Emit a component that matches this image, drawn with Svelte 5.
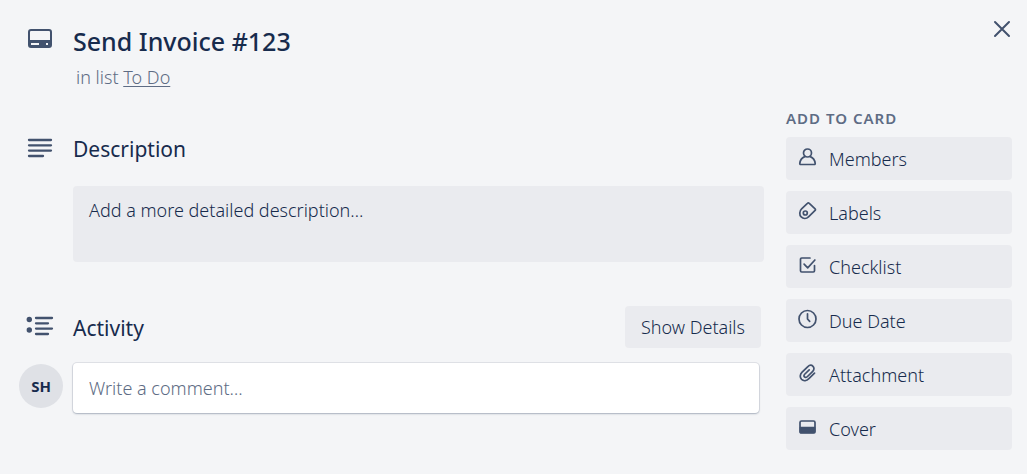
<script>
  let comment = $state('');
  let description = $state('');
  const actions = ['Members', 'Labels', 'Checklist', 'Due Date', 'Attachment', 'Cover'];
</script>

<div class="card">
  <header class="row head">
    <svg class="icon" viewBox="0 0 28 28" aria-hidden="true">
      <rect x="3" y="6" width="22" height="17" rx="2" fill="none" stroke="currentColor" stroke-width="2" />
      <path fill="currentColor" fill-rule="evenodd" d="M3 16h22v7H3zM5 19v2h8v-2zM20 19v2h2v-2z" />
    </svg>
    <div class="titles">
      <h1>Send Invoice #123</h1>
      <p>in list <a href="#todo">To Do</a></p>
    </div>
    <button class="close" aria-label="Close">
      <svg viewBox="0 0 20 20" aria-hidden="true"><path d="M3 3l14 14M17 3L3 17" fill="none" stroke="currentColor" stroke-width="2" stroke-linecap="round" /></svg>
    </button>
  </header>

  <div class="body">
    <main>
      <section class="row description">
        <svg class="icon" viewBox="0 0 28 28" aria-hidden="true">
          <path d="M3 5h22M3 10.300h22M3 15.600h22M3 21h14" fill="none" stroke="currentColor" stroke-width="2.300" stroke-linecap="round" />
        </svg>
        <h2><label for="description">Description</label></h2>
        <textarea id="description" class="field" placeholder="Add a more detailed description…" bind:value={description}></textarea>
      </section>

      <section class="row activity">
        <svg class="icon" viewBox="0 0 28 28" aria-hidden="true">
          <circle cx="3.300" cy="6.500" r="2.700" fill="currentColor" /><circle cx="3.300" cy="17" r="2.700" fill="currentColor" />
          <path d="M10 5h16M10 10.300h12M10 15.600h16M10 21h12" fill="none" stroke="currentColor" stroke-width="2.300" stroke-linecap="round" />
        </svg>
        <div class="bar">
          <h2>Activity</h2>
          <button class="soft">Show Details</button>
        </div>
        <div class="avatar">SH</div>
        <input class="comment" type="text" aria-label="Write a comment" placeholder="Write a comment…" bind:value={comment} />
      </section>
    </main>

    <aside>
      <h3>ADD TO CARD</h3>
      {#each actions as action}
        <button class="soft action">
          <svg viewBox="0 0 20 20" fill="none" stroke="currentColor" stroke-width="1.7" stroke-linecap="round" stroke-linejoin="round" aria-hidden="true">
            {#if action === 'Members'}
              <circle cx="9.500" cy="6" r="4" />
              <path d="M6.700 9.600C3.900 10.800 2.200 13 1.800 16.300c-.1.800.2 1.200 1 1.200h13.400c.8 0 1.100-.4 1-1.200-.4-3.300-2.100-5.500-4.900-6.700" />
            {:else if action === 'Labels'}
              <path d="M9.400 2.400 3.600 7.800C1.300 10 1.200 13.900 3.200 15.900s5.200 1.900 7.300-.1l6.600-6.400c.5-.5.5-1 0-1.500l-5.800-5.500c-.600-.600-1.300-.6-1.900 0z" />
              <circle cx="7.300" cy="12" r="2" />
            {:else if action === 'Checklist'}
              <path d="M12 3H3.700c-.8 0-1.200.4-1.200 1.200v11.600c0 .8.400 1.200 1.200 1.200h11.600c.8 0 1.200-.4 1.200-1.200v-5.300M6.100 9.200l3.600 3.600 7.200-7.800" />
            {:else if action === 'Due Date'}
              <circle cx="9.500" cy="10" r="8.500" />
              <path d="M9.500 4.800V10l2.200 2.400" />
            {:else if action === 'Attachment'}
              <path d="M16.500 10.200l-5.600 5.400c-2.300 2.300-5.300 2.700-7.300.8-2-2-1.700-5 .5-7.200l5.500-5.400c1.700-1.600 4-1.900 5.400-.5s1.200 3.600-.5 5.300l-5 4.900c-1 1-2.300 1.100-3 .4s-.6-1.900.4-2.900l4.300-4.200" />
            {:else}
              <rect x="2" y="4" width="15" height="12" rx="1.500" />
              <path d="M2.500 10.500h14v5h-14z" fill="currentColor" />
            {/if}
          </svg>
          <span>{action}</span>
        </button>
      {/each}
    </aside>
  </div>
</div>

<style>
  :global(body) {
    margin: 0;
    background: #f4f5f7;
  }
  .card {
    box-sizing: border-box;
    padding: 17px 15px 24px 19px;
    color: #172b4d;
    font-family: 'Segoe UI', 'Noto Sans', 'Open Sans', sans-serif;
    font-size: 18px;
    font-weight: 350;
    line-height: 24px;
  }
  h1, h2, h3, p {
    margin: 0;
  }
  button, input, textarea {
    box-sizing: border-box;
    margin: 0;
    border: 0;
    font: inherit;
    color: inherit;
  }
  .row {
    display: grid;
    grid-template-columns: 42px 1fr;
    column-gap: 12px;
  }
  .head {
    grid-template-columns: 42px 1fr auto;
  }
  .icon {
    width: 28px;
    height: 28px;
    margin-top: 8px;
    justify-self: center;
    color: #42526e;
    overflow: visible;
  }
  .head .icon, .activity .icon {
    margin-top: 7px;
  }
  h1 {
    font-size: 25px;
    font-weight: 500;
    line-height: 48px;
  }
  p {
    padding-left: 3px;
    color: #5e6c84;
  }
  a {
    color: inherit;
    text-underline-offset: 2px;
  }
  .close {
    width: 20px;
    height: 20px;
    margin-top: 2px;
    padding: 0;
    background: none;
    color: #42526e;
  }
  .close svg {
    display: block;
  }
  .body {
    display: grid;
    grid-template-columns: 1fr 226px;
    column-gap: 22px;
    padding-top: 17px;
  }
  .description {
    padding-top: 21px;
  }
  h2 {
    font-size: 21px;
    font-weight: 450;
    line-height: 44px;
  }
  .field {
    grid-column: 2;
    display: block;
    width: 100%;
    height: 76px;
    margin-top: 15px;
    padding: 12px 16px;
    border-radius: 4px;
    background: #eaebef;
    resize: none;
  }
  .field::placeholder {
    color: #172b4d;
    opacity: 1;
  }
  .activity {
    padding-top: 44px;
    row-gap: 13px;
  }
  .bar {
    display: flex;
    justify-content: space-between;
    padding-right: 3px;
  }
  .soft {
    height: 42px;
    padding: 0 16px;
    border-radius: 4px;
    background: #eaebef;
  }
  .avatar {
    display: grid;
    place-items: center;
    width: 44px;
    height: 44px;
    margin-top: 1px;
    border-radius: 50%;
    background: #dfe1e6;
    font-size: 15px;
    font-weight: 700;
  }
  .comment {
    width: calc(100% - 5px);
    height: 50px;
    padding: 0 16px;
    border-radius: 4px;
    background: #fff;
    box-shadow: 0 1px 2px rgba(9, 30, 66, 0.25), 0 0 0 1px rgba(9, 30, 66, 0.08);
  }
  .comment::placeholder {
    color: #5e6c84;
    opacity: 1;
  }
  aside {
    display: flex;
    flex-direction: column;
    gap: 11px;
  }
  h3 {
    margin-bottom: -4px;
    color: #5e6c84;
    font-size: 15px;
    font-weight: 600;
    line-height: 24px;
    letter-spacing: 1px;
  }
  .action {
    display: flex;
    align-items: center;
    gap: 11px;
    height: 43px;
    padding: 0 12px;
    font-weight: 300;
    text-align: left;
  }
  .action svg {
    width: 20px;
    height: 20px;
    margin-bottom: 3px;
    color: #42526e;
  }
</style>
